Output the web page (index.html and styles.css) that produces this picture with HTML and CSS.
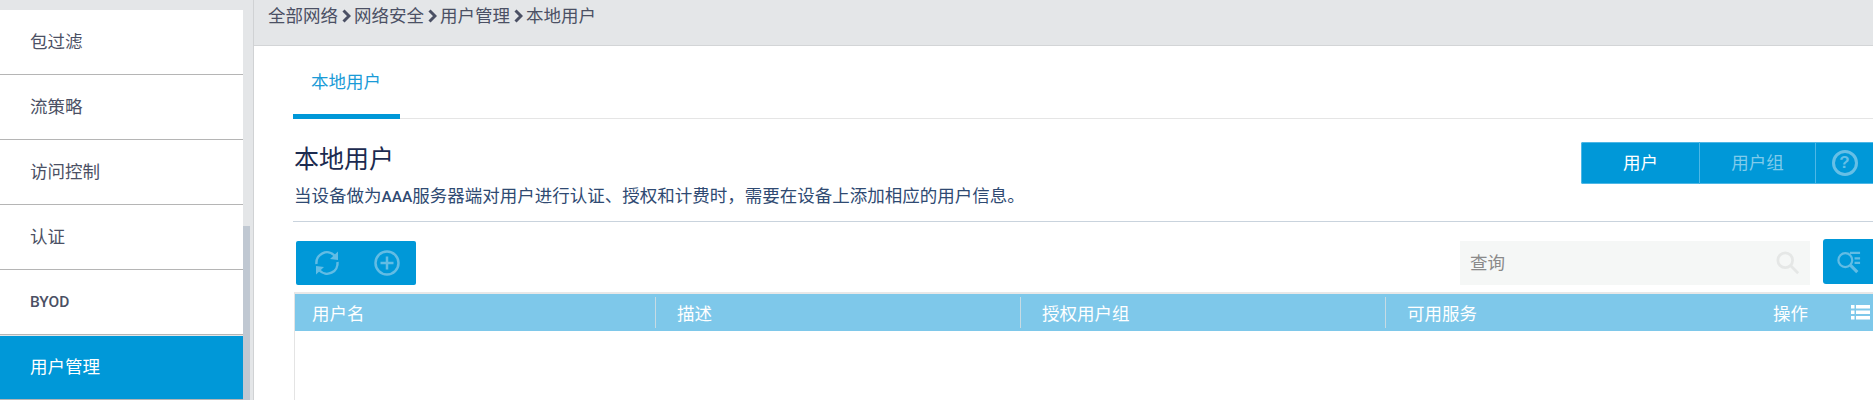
FILE: index.html
```html
<!DOCTYPE html>
<html lang="zh-CN">
  <head>
    <meta charset="UTF-8" />
    <title>本地用户</title>
    <link rel="stylesheet" href="styles.css">
  </head>
  <body>
    <div class="page">
      <ul class="side-menu">
        <li class="side-item">包过滤</li>
        <li class="side-item">流策略</li>
        <li class="side-item">访问控制</li>
        <li class="side-item">认证</li>
        <li class="side-item side-latin">BYOD</li>
        <li class="side-item active">用户管理</li>
      </ul>
      <div class="side-scroll"><div class="side-thumb"></div></div>

      <div class="main">
        <div class="crumbs">
          <span>全部网络</span>
          <svg class="crumb-sep" viewBox="0 0 9 14"><path d="M1.5 1.5 L7 7 L1.5 12.5" /></svg>
          <span>网络安全</span>
          <svg class="crumb-sep" viewBox="0 0 9 14"><path d="M1.5 1.5 L7 7 L1.5 12.5" /></svg>
          <span>用户管理</span>
          <svg class="crumb-sep" viewBox="0 0 9 14"><path d="M1.5 1.5 L7 7 L1.5 12.5" /></svg>
          <span>本地用户</span>
        </div>

        <div class="content">
          <div class="tabs">
            <div class="tab">本地用户</div>
          </div>

          <div class="head">
            <div class="head-text">
              <h1 class="title">本地用户</h1>
              <p class="desc">当设备做为<b class="latin">AAA</b>服务器端对用户进行认证、授权和计费时，需要在设备上添加相应的用户信息。</p>
            </div>
            <div class="switch">
              <div class="switch-btn switch-user">用户</div>
              <div class="switch-btn switch-group">用户组</div>
              <div class="switch-btn switch-help"><span class="help-mark">?</span></div>
            </div>
          </div>

          <div class="toolbar">
            <div class="tool-btns">
              <svg class="tool-icon" viewBox="0 0 28 28">
                <path d="M3.5 15 A10.5 10.5 0 0 1 21.5 6.5" />
                <path d="M24.5 13 A10.5 10.5 0 0 1 6.5 21.5" />
                <path class="fill" d="M25 2.5 L25 11 L17 10 Z" />
                <path class="fill" d="M3 25.5 L3 17 L11 18 Z" />
              </svg>
              <svg class="tool-icon" viewBox="0 0 28 28">
                <circle cx="14" cy="14" r="11.5" />
                <path d="M14 7.5 V20.5 M7.5 14 H20.5" />
              </svg>
            </div>
            <div class="search">
              <div class="search-box">
                <span class="search-hint">查询</span>
                <svg class="search-icon" viewBox="0 0 26 26">
                  <circle cx="10" cy="10" r="8" />
                  <path d="M16 16 L24 24" />
                </svg>
              </div>
              <div class="search-more">
                <svg class="more-icon" viewBox="0 0 28 26">
                  <circle cx="10" cy="11" r="7.5" />
                  <path class="thick" d="M15.5 16.5 L23 24" />
                  <path d="M15 3 H26 M20 9 H26 M20 14 H26" />
                </svg>
              </div>
            </div>
          </div>

          <div class="grid">
            <div class="grid-head">
              <div class="col">用户名</div>
              <div class="col">描述</div>
              <div class="col">授权用户组</div>
              <div class="col col-last">
                <span>可用服务</span>
                <span class="col-action">操作</span>
                <svg class="list-icon" viewBox="0 0 19 15">
                  <rect x="0" y="0" width="3.5" height="3.5" />
                  <rect x="5" y="0" width="14" height="3.5" />
                  <rect x="0" y="5.5" width="3.5" height="3.5" />
                  <rect x="5" y="5.5" width="14" height="3.5" />
                  <rect x="0" y="11" width="3.5" height="3.5" />
                  <rect x="5" y="11" width="14" height="3.5" />
                </svg>
              </div>
            </div>
          </div>
        </div>
      </div>
    </div>
  </body>
</html>
```

FILE: styles.css
```css
* {
  box-sizing: border-box;
}

body {
  margin: 0;
  height: 400px;
  overflow: hidden;
  background-color: #fff;
  font-family: "Liberation Sans", "Noto Sans CJK SC", sans-serif;
  font-size: 17.5px;
  color: #4b5064;
}

.page {
  display: flex;
  height: 400px;
}

/* left menu */
.side-menu {
  width: 243px;
  flex: none;
  margin: 0;
  padding: 10px 0 0;
  list-style: none;
  background-color: #e4e6e8;
}

.side-item {
  height: 65px;
  padding: 0 0 4px 30px;
  display: flex;
  align-items: center;
  background-color: #fff;
  border-bottom: 1px solid #b5b5b5;
}

.side-latin {
  padding-bottom: 0;
  font-family: Roboto, sans-serif;
  font-size: 15.5px;
  font-weight: 500;
}

.side-item.active {
  height: 64px;
  margin-top: 1px;
  color: #fff;
  background-color: #0098d8;
  border-bottom: 1px solid #b5b5b5;
}

.side-scroll {
  width: 11px;
  flex: none;
  background-color: #e4e6e8;
  border-right: 1px solid #d0d2d4;
}

.side-thumb {
  width: 7px;
  height: 174px;
  margin-top: 226px;
  background-color: #c0c8d2;
}

/* right part */
.main {
  flex: 1;
  min-width: 0;
}

.crumbs {
  height: 46px;
  padding: 6px 0 0 14px;
  display: flex;
  align-items: flex-start;
  gap: 3.5px;
  line-height: 20px;
  background-color: #e4e6e8;
  border-bottom: 1px solid #d3d5d7;
}

.crumb-sep {
  width: 9px;
  height: 14px;
  margin-top: 3px;
}

.crumb-sep path {
  fill: none;
  stroke: #4b5064;
  stroke-width: 3;
}

.content {
  padding-left: 39px;
}

.tabs {
  height: 73px;
  border-bottom: 1px solid #e5e5e5;
}

.tab {
  width: 107px;
  height: 73px;
  padding: 25px 0 0 18px;
  line-height: 22px;
  color: #1a9bd7;
  border-bottom: 5px solid #0098d8;
}

.head {
  height: 103px;
  display: flex;
  justify-content: space-between;
  border-bottom: 1px solid #c9d3dd;
}

.title {
  margin: 25px 0 0 1px;
  font-size: 25px;
  font-weight: 400;
  line-height: 30px;
  color: #1c2b50;
}

.desc {
  margin: 10px 0 0 1px;
  line-height: 24px;
  color: #2f4a72;
}

.latin {
  font-family: Roboto, sans-serif;
  font-size: 15.5px;
  font-weight: 500;
}

.switch {
  display: flex;
  height: 42px;
  margin-top: 23px;
  color: #fff;
  background-color: #0098d8;
  border-radius: 2px 0 0 2px;
}

.switch-btn {
  height: 42px;
  display: flex;
  align-items: center;
  justify-content: center;
  border: solid #4db7e6;
  border-width: 1px 1px 1px 0;
}

.switch-user {
  width: 119px;
  padding-bottom: 3px;
  border-left-width: 1px;
  border-radius: 2px 0 0 2px;
}

.switch-group {
  width: 116px;
  padding-bottom: 3px;
  color: #7fcbeb;
}

.switch-help {
  width: 57px;
  border-right: none;
}

.help-mark {
  width: 26px;
  height: 26px;
  display: flex;
  align-items: center;
  justify-content: center;
  border: 3px solid #66bfe6;
  border-radius: 50%;
  font-size: 17px;
  font-weight: 700;
  color: #66bfe6;
}

.toolbar {
  height: 70px;
  padding: 19px 0 0 3px;
  display: flex;
  justify-content: space-between;
}

.tool-btns {
  width: 120px;
  height: 44px;
  padding-left: 17px;
  display: flex;
  align-items: center;
  gap: 32px;
  background-color: #0098d8;
  border-radius: 2px;
}

.tool-icon {
  width: 28px;
  height: 28px;
}

.tool-icon path,
.tool-icon circle {
  fill: none;
  stroke: #62bce4;
  stroke-width: 2.5;
}

.tool-icon .fill {
  fill: #62bce4;
  stroke: none;
}

.search {
  display: flex;
  align-items: flex-start;
  gap: 13px;
}

.search-box {
  width: 350px;
  height: 44px;
  padding: 0 10px;
  display: flex;
  align-items: center;
  justify-content: space-between;
  color: #8a8a8a;
  background-color: #f5f7f6;
}

.search-hint {
  margin-bottom: 4px;
}

.search-icon {
  width: 24px;
  height: 24px;
}

.search-icon circle,
.search-icon path {
  fill: none;
  stroke: #e5e7e6;
  stroke-width: 3;
}

.search-more {
  width: 50px;
  height: 45px;
  margin-top: -2px;
  padding: 11px 0 0 13px;
  background-color: #0098d8;
  border-radius: 3px 0 0 3px;
}

.more-icon {
  display: block;
  width: 26px;
  height: 24px;
}

.more-icon circle,
.more-icon path {
  fill: none;
  stroke: #62bce4;
  stroke-width: 2.4;
}

.more-icon .thick {
  stroke-width: 3.4;
}

.grid {
  height: 120px;
  margin-left: 1px;
  border-top: 2px solid #e8e8e8;
  border-left: 1px solid #e4e4e4;
}

.grid-head {
  display: flex;
  height: 37px;
  padding: 3px 0;
  color: #fff;
  background-color: #7ec8ea;
}

.col {
  width: 365px;
  flex: none;
  padding-left: 21px;
  display: flex;
  align-items: center;
  border-right: 1px solid #c6dbe4;
}

.col:first-child {
  width: 361px;
  padding-left: 17px;
}

.col-last {
  flex: 1;
  border-right: none;
}

.col-action {
  margin-left: auto;
}

.list-icon {
  width: 19px;
  height: 15px;
  margin: 0 3px 0 43px;
  fill: #fff;
}
```
